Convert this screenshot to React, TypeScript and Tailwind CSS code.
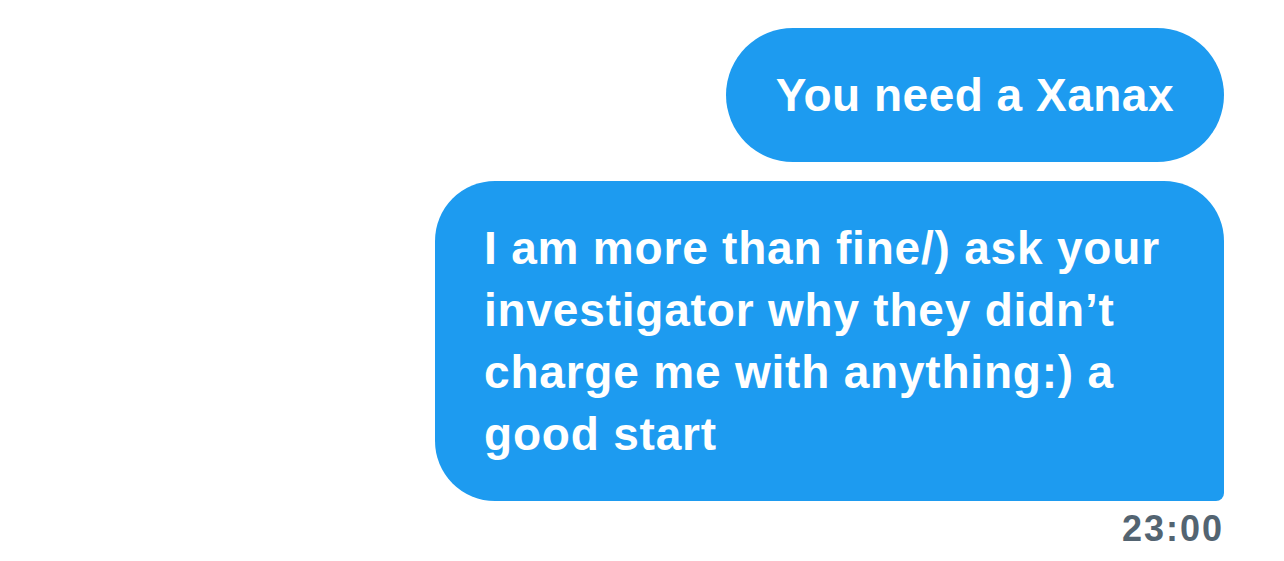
const BLUE = "bg-[#1d9bf0]";

type Bubble = { lines: string[]; last?: boolean };

const messages: Bubble[] = [
  { lines: ["You need a Xanax"] },
  {
    lines: [
      "I am more than fine/) ask your",
      "investigator why they didn’t",
      "charge me with anything:) a",
      "good start",
    ],
    last: true,
  },
];

function MessageBubble({ lines, last }: Bubble) {
  if (lines.length === 1) {
    return (
      <div
        className={`${BLUE} h-[134px] flex items-center px-[50px] rounded-[67px] text-white text-[46px] leading-[54px] font-bold tracking-[0.5px]`}
      >
        {lines[0]}
      </div>
    );
  }
  return (
    <div
      className={`${BLUE} w-[789px] pl-[49px] pr-[30px] py-[36px] text-white text-[46px] leading-[62px] font-bold tracking-[0.8px] rounded-[60px] ${
        last ? "rounded-br-[8px]" : ""
      }`}
    >
      {lines.map((l, i) => (
        <div key={i} className="whitespace-nowrap">
          {l}
        </div>
      ))}
    </div>
  );
}

export default function App() {
  return (
    <div className="w-[1284px] h-[561px] bg-white font-['Liberation_Sans',Arial,sans-serif] overflow-hidden">
      <div className="flex flex-col items-end pt-[28px] pr-[60px] gap-[19px]">
        {messages.map((m, i) => (
          <MessageBubble key={i} {...m} />
        ))}
      </div>
      <div className="flex justify-end pr-[60px] mt-[8px]">
        <span className="text-[36px] leading-[40px] font-bold tracking-[2px] text-[#536471]">
          23:00
        </span>
      </div>
    </div>
  );
}
